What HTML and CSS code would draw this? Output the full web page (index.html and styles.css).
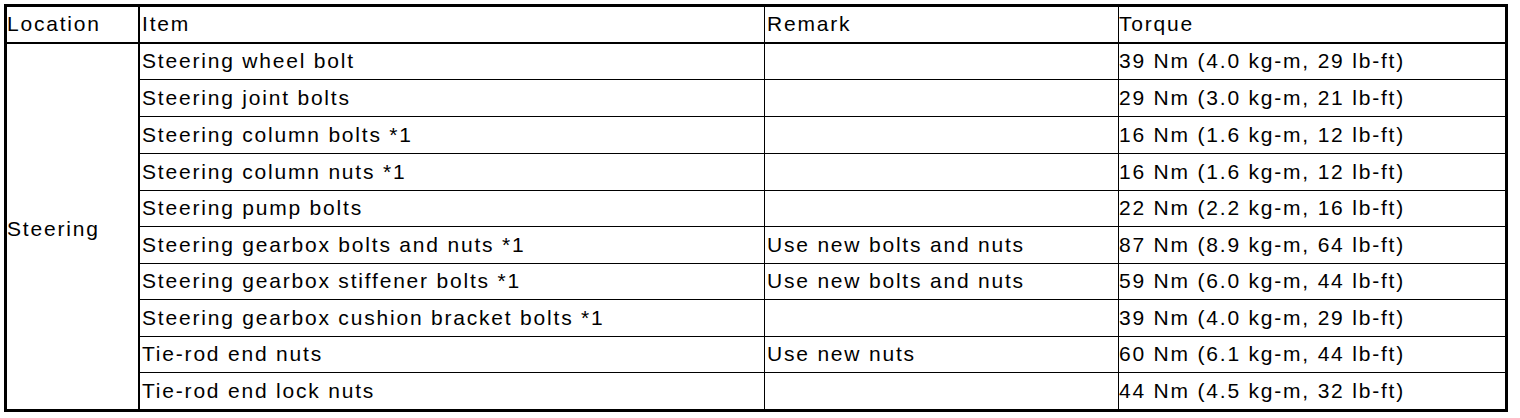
FILE: index.html
```html
<!DOCTYPE html>
<html lang="en">
<head>
<meta charset="utf-8">
<title>Steering torque specifications</title>
<link rel="stylesheet" href="styles.css">
</head>
<body>
<div class="spec" role="table">
  <div class="cell head c-loc" role="columnheader">Location</div>
  <div class="cell head c-item" role="columnheader">Item</div>
  <div class="cell head c-rem" role="columnheader">Remark</div>
  <div class="cell head c-tq" role="columnheader">Torque</div>

  <div class="cell loc" role="cell">Steering</div>

  <div class="cell c-item">Steering wheel bolt</div>
  <div class="cell c-rem"></div>
  <div class="cell c-tq">39 Nm (4.0 kg-m, 29 lb-ft)</div>

  <div class="cell c-item">Steering joint bolts</div>
  <div class="cell c-rem"></div>
  <div class="cell c-tq">29 Nm (3.0 kg-m, 21 lb-ft)</div>

  <div class="cell c-item">Steering column bolts *1</div>
  <div class="cell c-rem"></div>
  <div class="cell c-tq">16 Nm (1.6 kg-m, 12 lb-ft)</div>

  <div class="cell c-item">Steering column nuts *1</div>
  <div class="cell c-rem"></div>
  <div class="cell c-tq">16 Nm (1.6 kg-m, 12 lb-ft)</div>

  <div class="cell c-item">Steering pump bolts</div>
  <div class="cell c-rem"></div>
  <div class="cell c-tq">22 Nm (2.2 kg-m, 16 lb-ft)</div>

  <div class="cell c-item">Steering gearbox bolts and nuts *1</div>
  <div class="cell c-rem">Use new bolts and nuts</div>
  <div class="cell c-tq">87 Nm (8.9 kg-m, 64 lb-ft)</div>

  <div class="cell c-item">Steering gearbox stiffener bolts *1</div>
  <div class="cell c-rem">Use new bolts and nuts</div>
  <div class="cell c-tq">59 Nm (6.0 kg-m, 44 lb-ft)</div>

  <div class="cell c-item">Steering gearbox cushion bracket bolts *1</div>
  <div class="cell c-rem"></div>
  <div class="cell c-tq">39 Nm (4.0 kg-m, 29 lb-ft)</div>

  <div class="cell c-item">Tie-rod end nuts</div>
  <div class="cell c-rem">Use new nuts</div>
  <div class="cell c-tq">60 Nm (6.1 kg-m, 44 lb-ft)</div>

  <div class="cell c-item last">Tie-rod end lock nuts</div>
  <div class="cell c-rem last"></div>
  <div class="cell c-tq last">44 Nm (4.5 kg-m, 32 lb-ft)</div>
</div>
</body>
</html>
```
FILE: styles.css
```css
html, body {
  margin: 0;
  padding: 0;
  background: #fff;
}

body {
  padding: 4px;
}

.spec {
  display: grid;
  width: 1504px;
  box-sizing: border-box;
  border: 3px solid #000;
  grid-template-columns: 133px 625px 354px 386px;
  grid-template-rows: 37px 36px 37px 37px 37px 36px 37px 36px 37px 36px 36px;
  font-family: "Liberation Sans", Arial, sans-serif;
  font-size: 21px;
  letter-spacing: 1.8px;
  color: #000;
}

.cell {
  box-sizing: border-box;
  display: flex;
  align-items: center;
  white-space: nowrap;
  border-bottom: 1px solid #000;
  border-right: 1px solid #000;
  padding-bottom: 1px;
  line-height: 24px;
}

.head {
  border-bottom-width: 2px;
  padding-bottom: 2px;
}

.c-loc { padding-left: 0; border-right-width: 2px; }
.c-item { padding-left: 2px; }
.c-rem { padding-left: 2px; }
.c-tq { padding-left: 0; border-right: 0; }

.loc {
  grid-column: 1;
  grid-row: 2 / span 10;
  border-right-width: 2px;
  border-bottom: 0;
  padding-left: 0;
  padding-top: 4px;
  padding-bottom: 0;
}

.last { border-bottom: 0; }
```
